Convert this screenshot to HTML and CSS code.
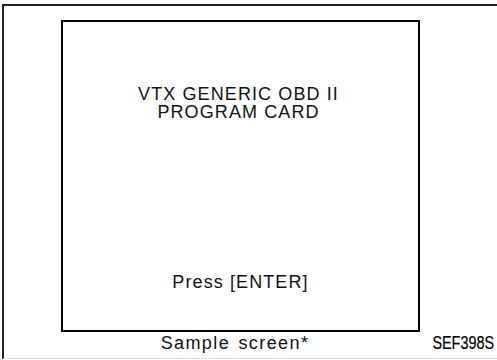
FILE: index.html
```html
<!DOCTYPE html>
<html>
<head>
<meta charset="utf-8">
<title>VTX Generic OBD II - Sample screen</title>
<link rel="stylesheet" href="styles.css">
</head>
<body>

<div class="frame">
	<div class="screen">
		<div class="title">VTX GENERIC OBD II<br>PROGRAM CARD</div>
		<div class="prompt">Press [ENTER]</div>
	</div>
	<div class="caption">
		<div class="sample">Sample screen*</div>
		<div class="code">SEF398S</div>
	</div>
</div>

</body>
</html>
```
FILE: styles.css
```css
body {
	margin: 0px;
	background: #fff;
	color: #111;
	font-family: "Liberation Sans", Arial, sans-serif;
	font-size: 18px;
	line-height: 18px;
}
.frame {
	box-sizing: border-box;
	height: 355px;
	margin: 4px 0 0 2px;
	padding: 14px 0 0 57px;
	border-top: 2px solid #222;
	border-left: 2px solid #222;
	border-bottom: 1px solid #ddd;
}
.screen {
	box-sizing: border-box;
	width: 359px;
	height: 312px;
	border: 2px solid #000;
	padding: 63px 0 39px;
	display: flex;
	flex-direction: column;
	align-items: center;
}
.title {
	text-align: center;
	letter-spacing: 1.1px;
	padding-right: 4px;
}
.prompt {
	margin-top: auto;
	letter-spacing: 1.1px;
}
.caption {
	display: flex;
	align-items: baseline;
	margin-top: 2px;
}
.sample {
	box-sizing: border-box;
	width: 359px;
	padding-right: 8px;
	text-align: center;
	letter-spacing: 1.4px;
	word-spacing: 2px;
}
.code {
	margin-left: auto;
	margin-right: 3px;
	color: #000;
	transform: scaleX(0.8);
	transform-origin: right center;
	-webkit-text-stroke: 0.2px #000;
}
```
